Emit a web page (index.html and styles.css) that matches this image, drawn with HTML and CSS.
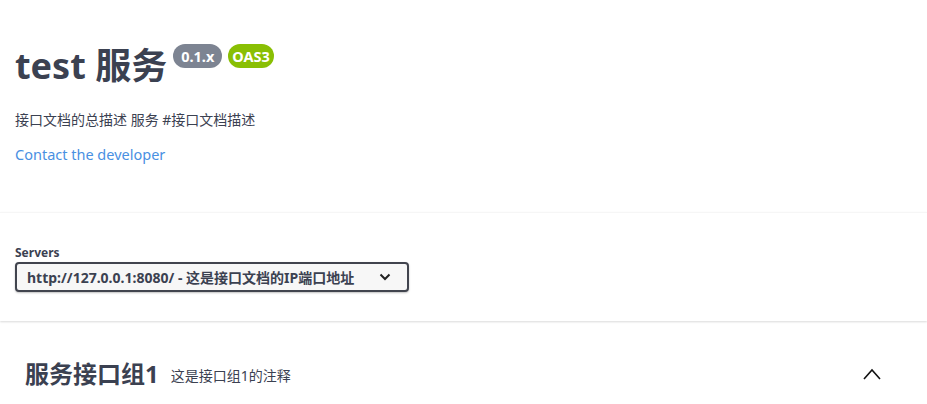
FILE: index.html
```html
<!DOCTYPE html>
<html lang="zh">
<head>
<meta charset="utf-8">
<link rel="stylesheet" href="styles.css">
</head>
<body>
<div class="info">
  <hgroup class="main">
    <h2 class="title">test 服务<span class="badge version">0.1.x</span><span class="badge oas">OAS3</span></h2>
  </hgroup>
  <p class="desc">接口文档的总描述 服务 #接口文档描述</p>
  <a class="contact" href="#">Contact the developer</a>
</div>
<section class="scheme">
  <div class="servers">
    <label class="servers-label">Servers</label>
    <div class="select">
      <span>http://127.0.0.1:8080/ - 这是接口文档的IP端口地址</span>
      <svg class="caret" width="12" height="8" viewBox="0 0 12 8"><path d="M1.5 1.5 L6 6 L10.5 1.5" fill="none" stroke="#222" stroke-width="2"/></svg>
    </div>
  </div>
</section>
<section class="tag">
  <h3 class="tag-title">服务接口组1</h3>
  <span class="tag-desc">这是接口组1的注释</span>
  <svg class="chev" width="20" height="14" viewBox="0 0 20 14"><path d="M2 12 L10 3 L18 12" fill="none" stroke="#111" stroke-width="1.6"/></svg>
</section>
</body>
</html>
```
FILE: styles.css
```css
html, body { margin: 0; padding: 0; background: #fff; }
body { font-family: "Noto Sans", "Noto Sans CJK SC", sans-serif; color: #3b4151; }
.info { padding: 37px 15px 0; height: 176px; box-sizing: border-box; }
.main { margin: 0; }
.title { margin: 0; font-size: 36px; font-weight: 700; line-height: 58px; color: #3b4151; white-space: nowrap; }
.badge { display: inline-block; vertical-align: top; margin-top: 7px; font-size: 14.5px; font-weight: 700; line-height: 20px; padding: 2px 8px 2px; border-radius: 57px; color: #fff; }
.version { background: #7d8492; margin-left: 6px; }
.oas { background: #89bf04; margin-left: 6px; padding: 2px 4px 2px; }
.desc { margin: 15px 0 0; font-size: 14px; line-height: 20px; }
.contact { display: inline-block; margin-top: 14px; font-size: 14.5px; line-height: 20px; color: #4990e2; text-decoration: none; }
.scheme { margin-top: 36px; padding: 32px 15px 29px; background: #fff; border-top: 1px solid #f6f6f6; box-shadow: 0 1px 2px 0 rgba(0,0,0,.15); }
.servers { display: flex; flex-direction: column; align-items: flex-start; }
.servers-label { font-size: 12px; font-weight: 700; line-height: 15px; margin-bottom: 2px; }
.select { display: flex; align-items: center; box-sizing: border-box; width: 394px; height: 30px; padding: 0 16px 0 10px; border: 2px solid #41444e; border-radius: 4px; background: #f7f7f7; box-shadow: 0 1px 2px 0 rgba(0,0,0,.25); font-size: 14px; font-weight: 700; color: #3b4151; justify-content: space-between; white-space: nowrap; }
.tag { display: flex; align-items: center; padding: 0 45px 0 25px; margin-top: 37px; height: 32px; }
.tag-title { margin: 0; font-size: 24px; font-weight: 700; color: #3b4151; line-height: 32px; }
.tag-desc { flex: 1; padding-left: 12px; font-size: 14px; color: #3b4151; padding-top: 1px; }
.chev { display: block; }
```
